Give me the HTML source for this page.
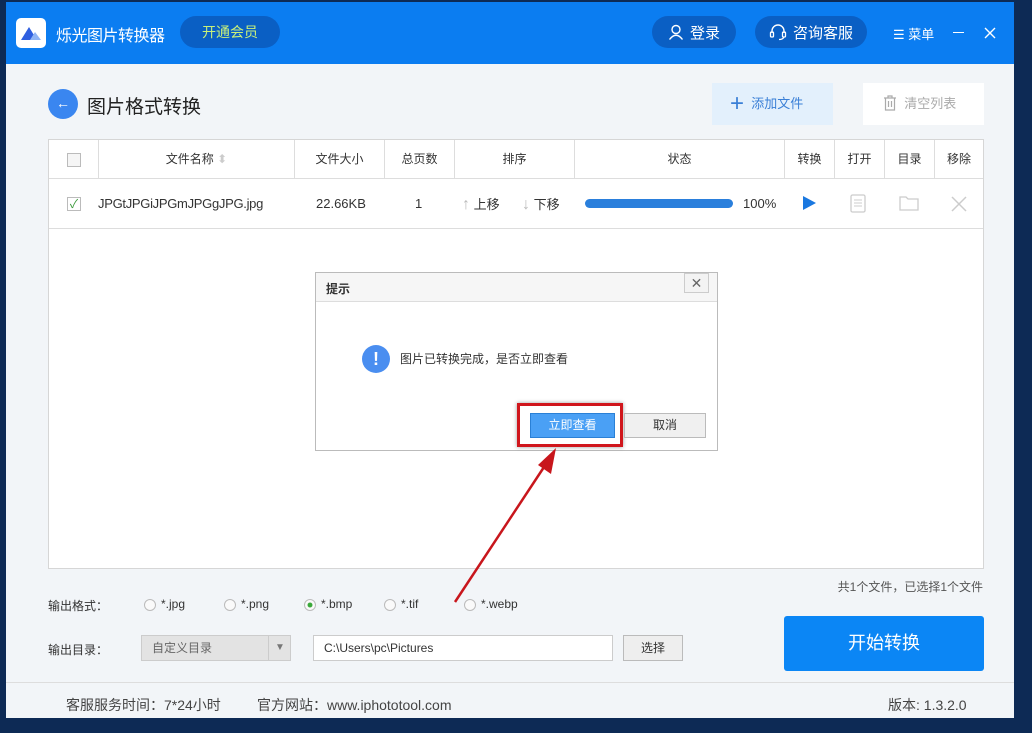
<!DOCTYPE html>
<html><head><meta charset="utf-8"><style>
*{margin:0;padding:0;box-sizing:border-box}
body{width:1032px;height:733px;background:#0d2a55;position:relative;overflow:hidden;font-family:"Liberation Sans","Noto Sans CJK SC",sans-serif;font-size:12px;color:#333}
.a{position:absolute}
.win{left:6px;top:2px;width:1008px;height:716px;background:#f2f5f8}
.tb{left:6px;top:2px;width:1008px;height:62px;background:#0b7df1}
.pill{background:#0a5fc4;border-radius:17px;color:#fff;font-size:15px;height:32px;display:flex;align-items:center;justify-content:center;gap:6px}
.th{border-right:1px solid #ddd;text-align:center;line-height:39px;font-size:12px;color:#333}
.rd{width:12px;height:12px;border:1px solid #bbb;border-radius:50%;background:#fafafa}
</style></head><body>
<div class="a win"></div>
<div class="a tb"></div>
<div class="a" style="left:16px;top:18px;width:30px;height:30px;background:#fff;border-radius:5px">
<svg width="30" height="30"><path d="M5 22 L13 9 L21 22Z" fill="#2f5fe0"/><path d="M14 22 L19 14 L25 22Z" fill="#8fb4f5"/></svg></div>
<div class="a" style="left:56px;top:22px;color:#fff;font-size:16px;letter-spacing:-0.5px">烁光图片转换器</div>
<div class="a pill" style="left:180px;top:16px;width:100px;color:#c8f07a;font-size:14px">开通会员</div>
<div class="a pill" style="left:652px;top:16px;width:84px"><svg width="16" height="16" viewBox="0 0 16 16"><circle cx="8" cy="5.5" r="4" fill="none" stroke="#fff" stroke-width="1.4"/><path d="M1.5 15.5 Q8 7 14.5 15.5" fill="none" stroke="#fff" stroke-width="1.4"/></svg><span>登录</span></div>
<div class="a pill" style="left:755px;top:16px;width:112px"><svg width="18" height="18" viewBox="0 0 18 18"><path d="M3 10 V8 A6 6 0 0 1 15 8 V10" fill="none" stroke="#fff" stroke-width="1.4"/><rect x="1.5" y="9" width="3" height="5" rx="1" fill="none" stroke="#fff" stroke-width="1.3"/><rect x="13.5" y="9" width="3" height="5" rx="1" fill="none" stroke="#fff" stroke-width="1.3"/><path d="M15 14 Q14 16.5 10 16.5" fill="none" stroke="#fff" stroke-width="1.2"/></svg><span>咨询客服</span></div>
<div class="a" style="left:893px;top:24px;color:#fff;font-size:13px">☰ 菜单</div>
<div class="a" style="left:953px;top:32px;width:11px;height:1px;background:#fff"></div>
<svg class="a" style="left:984px;top:27px" width="12" height="12"><path d="M1 1L11 11M11 1L1 11" stroke="#fff" stroke-width="1.4"/></svg>

<div class="a" style="left:48px;top:89px;width:30px;height:30px;border-radius:50%;background:#3a86f0;color:#fff;text-align:center;line-height:29px;font-size:14px">←</div>
<div class="a" style="left:87px;top:92px;font-size:19px;color:#222">图片格式转换</div>
<div class="a" style="left:712px;top:83px;width:121px;height:42px;background:#e3f0fc;color:#3a7fd6;line-height:42px;font-size:13px"><span style="font-size:24px;margin-left:18px;vertical-align:-3px">+</span> &nbsp;添加文件</div>
<div class="a" style="left:863px;top:83px;width:121px;height:42px;background:#fff;color:#aaa;line-height:42px;font-size:13px;padding-left:20px"><svg width="14" height="16" style="vertical-align:-3px"><path d="M1 3H13M5 3V1H9V3M2.5 3V15H11.5V3M5.5 6V12M8.5 6V12" fill="none" stroke="#aaa" stroke-width="1.2"/></svg> &nbsp;清空列表</div>

<div class="a" style="left:48px;top:139px;width:936px;height:430px;background:#fff;border:1px solid #d6d6d6"></div>
<div class="a" style="left:49px;top:140px;width:934px;height:39px;border-bottom:1px solid #ddd;display:flex">
<div class="th" style="width:50px"><span style="display:inline-block;width:14px;height:14px;border:1px solid #bbb;vertical-align:middle;background:#f5f5f5"></span></div>
<div class="th" style="width:196px">文件名称 <span style="color:#ccc">⬍</span></div>
<div class="th" style="width:90px">文件大小</div>
<div class="th" style="width:70px">总页数</div>
<div class="th" style="width:120px">排序</div>
<div class="th" style="width:210px">状态</div>
<div class="th" style="width:50px">转换</div>
<div class="th" style="width:50px">打开</div>
<div class="th" style="width:50px">目录</div>
<div class="th" style="width:48px;border:none">移除</div>
</div>
<div class="a" style="left:49px;top:228px;width:934px;height:1px;background:#ddd"></div>
<div class="a" style="left:67px;top:197px;width:14px;height:14px;border:1px solid #bbb;color:#3a9a3a;font-size:12px;line-height:12px;text-align:center">✓</div>
<div class="a" style="left:98px;top:196px;font-size:13px;letter-spacing:-0.3px">JPGtJPGiJPGmJPGgJPG.jpg</div>
<div class="a" style="left:316px;top:196px;font-size:13px">22.66KB</div>
<div class="a" style="left:415px;top:196px;font-size:13px">1</div>
<div class="a" style="left:462px;top:194px;font-size:13px"><span style="color:#bbb;font-size:16px">↑</span> 上移</div>
<div class="a" style="left:522px;top:194px;font-size:13px"><span style="color:#bbb;font-size:16px">↓</span> 下移</div>
<div class="a" style="left:585px;top:199px;width:148px;height:9px;border-radius:5px;background:#2a7fdc"></div>
<div class="a" style="left:743px;top:196px;font-size:13px">100%</div>
<div class="a" style="left:803px;top:196px;width:0;height:0;border-left:13px solid #1a78e0;border-top:7px solid transparent;border-bottom:7px solid transparent"></div>
<svg class="a" style="left:850px;top:194px" width="16" height="19"><rect x="1" y="1" width="14" height="17" rx="1.5" fill="none" stroke="#ccc" stroke-width="1.3"/><path d="M4 6H12M4 9H12M4 12H12" stroke="#ccc"/></svg>
<svg class="a" style="left:899px;top:195px" width="20" height="16"><path d="M1 2H7L9 4H19V15H1Z" fill="none" stroke="#ccc" stroke-width="1.3"/></svg>
<svg class="a" style="left:951px;top:196px" width="16" height="16"><path d="M1 1L15 15M15 1L1 15" stroke="#ccc" stroke-width="1.5"/></svg>

<!-- dialog -->
<div class="a" style="left:315px;top:272px;width:403px;height:179px;background:#fff;border:1px solid #bbb"></div>
<div class="a" style="left:316px;top:273px;width:401px;height:29px;background:#f6f6f6;border-bottom:1px solid #ddd;font-weight:bold;padding:7px 10px;font-size:12px">提示</div>
<div class="a" style="left:684px;top:273px;width:25px;height:20px;border:1px solid #ccc;background:#f3f3f3;text-align:center;color:#666;line-height:18px;font-size:14px">✕</div>
<div class="a" style="left:362px;top:345px;width:28px;height:28px;border-radius:50%;background:#4a8ef0;color:#fff;text-align:center;line-height:28px;font-weight:bold;font-size:18px">!</div>
<div class="a" style="left:400px;top:350px;font-size:12px">图片已转换完成，是否立即查看</div>
<div class="a" style="left:517px;top:403px;width:106px;height:44px;border:3px solid #d0161c;box-shadow:0 0 4px rgba(0,0,0,.4)"></div>
<div class="a" style="left:530px;top:413px;width:85px;height:25px;background:#4aa0f5;border:1px solid #2a80d6;color:#fff;text-align:center;line-height:23px">立即查看</div>
<div class="a" style="left:624px;top:413px;width:82px;height:25px;background:#f0f0f0;border:1px solid #bbb;text-align:center;line-height:23px">取消</div>
<svg class="a" style="left:0;top:0" width="1032" height="733"><line x1="455" y1="602" x2="546" y2="464" stroke="#c8161c" stroke-width="2.5"/><path d="M556 448 L551 474 L538 465Z" fill="#c8161c"/></svg>

<div class="a" style="right:49px;top:578px;font-size:12px;color:#555">共1个文件，已选择1个文件</div>
<div class="a" style="left:48px;top:597px">输出格式：</div>
<div class="a rd" style="left:144px;top:599px"></div><div class="a" style="left:161px;top:597px">*.jpg</div>
<div class="a rd" style="left:224px;top:599px"></div><div class="a" style="left:241px;top:597px">*.png</div>
<div class="a rd" style="left:304px;top:599px;background:radial-gradient(circle,#3aa83a 30%,#fafafa 40%)"></div><div class="a" style="left:321px;top:597px">*.bmp</div>
<div class="a rd" style="left:384px;top:599px"></div><div class="a" style="left:401px;top:597px">*.tif</div>
<div class="a rd" style="left:464px;top:599px"></div><div class="a" style="left:481px;top:597px">*.webp</div>
<div class="a" style="left:48px;top:641px">输出目录：</div>
<div class="a" style="left:141px;top:635px;width:150px;height:26px;background:#e3e3e3;border:1px solid #ccc;line-height:24px;padding-left:10px;color:#666">自定义目录<span style="position:absolute;left:126px;border-left:1px solid #ccc;padding-left:6px;color:#777;font-size:10px">▼</span></div>
<div class="a" style="left:313px;top:635px;width:300px;height:26px;background:#fff;border:1px solid #ccc;line-height:24px;padding-left:10px">C:\Users\pc\Pictures</div>
<div class="a" style="left:623px;top:635px;width:60px;height:26px;background:#eee;border:1px solid #bbb;line-height:24px;text-align:center">选择</div>
<div class="a" style="left:784px;top:616px;width:200px;height:55px;background:#0b86f5;border-radius:3px;color:#fff;font-size:18px;text-align:center;line-height:55px">开始转换</div>
<div class="a" style="left:6px;top:682px;width:1008px;height:1px;background:#ddd"></div>
<div class="a" style="left:66px;top:695px;font-size:14px;color:#444">客服服务时间：7*24小时</div>
<div class="a" style="left:257px;top:695px;font-size:14px;color:#444">官方网站：www.iphototool.com</div>
<div class="a" style="left:888px;top:695px;font-size:14px;color:#444">版本: 1.3.2.0</div>
</body></html>
